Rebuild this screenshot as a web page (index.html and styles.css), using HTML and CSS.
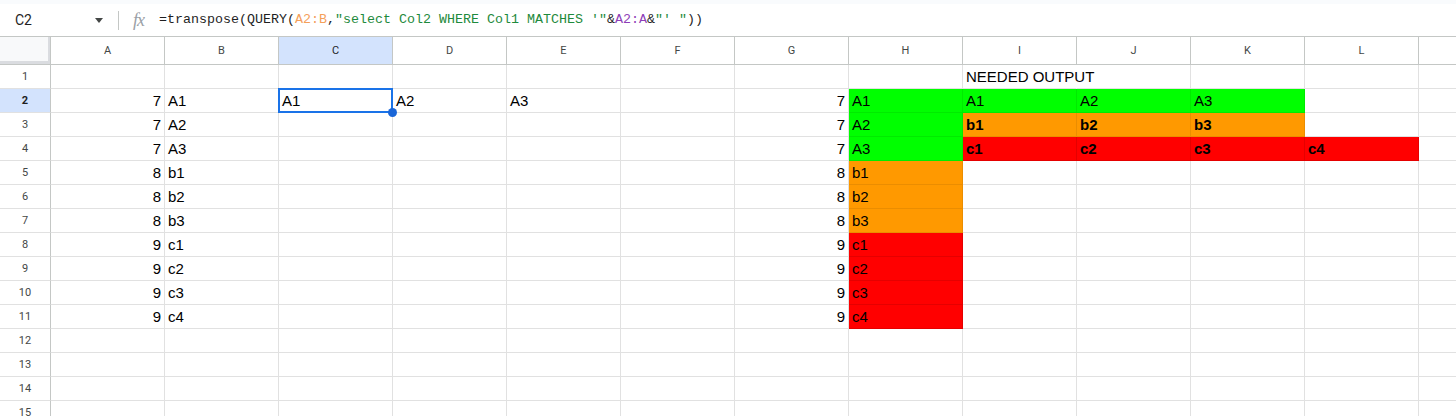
FILE: index.html
```html
<!DOCTYPE html>
<html>
<head>
<meta charset="utf-8">
<link rel="stylesheet" href="styles.css">
</head>
<body>
<div class="topstrip"></div>
<div class="fbar">
  <div class="namebox"><span class="nb-text">C2</span><span class="nb-arrow"></span></div>
  <div class="sep"></div>
  <div class="fx">fx</div>
  <div class="formula"><span class="fd">=transpose(QUERY(</span><span class="fo">A2:B</span><span class="fd">,</span><span class="fg">"select Col2 WHERE Col1 MATCHES '"</span><span class="fd">&amp;</span><span class="fp">A2:A</span><span class="fd">&amp;</span><span class="fg">"' "</span><span class="fd">))</span></div>
</div>
<div class="sheet">
  <div class="row hdr">
    <div class="corner"></div>
    <div class="ch">A</div><div class="ch">B</div><div class="ch on">C</div><div class="ch">D</div><div class="ch">E</div><div class="ch">F</div><div class="ch">G</div><div class="ch">H</div><div class="ch">I</div><div class="ch">J</div><div class="ch">K</div><div class="ch">L</div><div class="ch">M</div>
  </div>
  <div class="row">
    <div class="rh">1</div>
    <div class="c"></div><div class="c"></div><div class="c"></div><div class="c"></div><div class="c"></div><div class="c"></div><div class="c"></div><div class="c"></div><div class="c ov">NEEDED OUTPUT</div><div class="c"></div><div class="c"></div><div class="c"></div><div class="c"></div>
  </div>
  <div class="row">
    <div class="rh on">2</div>
    <div class="c n">7</div><div class="c">A1</div><div class="c cur">A1<div class="selbox"><div class="handle"></div></div></div><div class="c">A2</div><div class="c">A3</div><div class="c"></div><div class="c n">7</div><div class="c g">A1</div><div class="c g">A1</div><div class="c g">A2</div><div class="c g">A3</div><div class="c"></div><div class="c"></div>
  </div>
  <div class="row">
    <div class="rh">3</div>
    <div class="c n">7</div><div class="c">A2</div><div class="c"></div><div class="c"></div><div class="c"></div><div class="c"></div><div class="c n">7</div><div class="c g">A2</div><div class="c o b">b1</div><div class="c o b">b2</div><div class="c o b">b3</div><div class="c"></div><div class="c"></div>
  </div>
  <div class="row">
    <div class="rh">4</div>
    <div class="c n">7</div><div class="c">A3</div><div class="c"></div><div class="c"></div><div class="c"></div><div class="c"></div><div class="c n">7</div><div class="c g">A3</div><div class="c r b">c1</div><div class="c r b">c2</div><div class="c r b">c3</div><div class="c r b">c4</div><div class="c"></div>
  </div>
  <div class="row">
    <div class="rh">5</div>
    <div class="c n">8</div><div class="c">b1</div><div class="c"></div><div class="c"></div><div class="c"></div><div class="c"></div><div class="c n">8</div><div class="c o">b1</div><div class="c"></div><div class="c"></div><div class="c"></div><div class="c"></div><div class="c"></div>
  </div>
  <div class="row">
    <div class="rh">6</div>
    <div class="c n">8</div><div class="c">b2</div><div class="c"></div><div class="c"></div><div class="c"></div><div class="c"></div><div class="c n">8</div><div class="c o">b2</div><div class="c"></div><div class="c"></div><div class="c"></div><div class="c"></div><div class="c"></div>
  </div>
  <div class="row">
    <div class="rh">7</div>
    <div class="c n">8</div><div class="c">b3</div><div class="c"></div><div class="c"></div><div class="c"></div><div class="c"></div><div class="c n">8</div><div class="c o">b3</div><div class="c"></div><div class="c"></div><div class="c"></div><div class="c"></div><div class="c"></div>
  </div>
  <div class="row">
    <div class="rh">8</div>
    <div class="c n">9</div><div class="c">c1</div><div class="c"></div><div class="c"></div><div class="c"></div><div class="c"></div><div class="c n">9</div><div class="c r">c1</div><div class="c"></div><div class="c"></div><div class="c"></div><div class="c"></div><div class="c"></div>
  </div>
  <div class="row">
    <div class="rh">9</div>
    <div class="c n">9</div><div class="c">c2</div><div class="c"></div><div class="c"></div><div class="c"></div><div class="c"></div><div class="c n">9</div><div class="c r">c2</div><div class="c"></div><div class="c"></div><div class="c"></div><div class="c"></div><div class="c"></div>
  </div>
  <div class="row">
    <div class="rh">10</div>
    <div class="c n">9</div><div class="c">c3</div><div class="c"></div><div class="c"></div><div class="c"></div><div class="c"></div><div class="c n">9</div><div class="c r">c3</div><div class="c"></div><div class="c"></div><div class="c"></div><div class="c"></div><div class="c"></div>
  </div>
  <div class="row">
    <div class="rh">11</div>
    <div class="c n">9</div><div class="c">c4</div><div class="c"></div><div class="c"></div><div class="c"></div><div class="c"></div><div class="c n">9</div><div class="c r">c4</div><div class="c"></div><div class="c"></div><div class="c"></div><div class="c"></div><div class="c"></div>
  </div>
  <div class="row">
    <div class="rh">12</div>
    <div class="c"></div><div class="c"></div><div class="c"></div><div class="c"></div><div class="c"></div><div class="c"></div><div class="c"></div><div class="c"></div><div class="c"></div><div class="c"></div><div class="c"></div><div class="c"></div><div class="c"></div>
  </div>
  <div class="row">
    <div class="rh">13</div>
    <div class="c"></div><div class="c"></div><div class="c"></div><div class="c"></div><div class="c"></div><div class="c"></div><div class="c"></div><div class="c"></div><div class="c"></div><div class="c"></div><div class="c"></div><div class="c"></div><div class="c"></div>
  </div>
  <div class="row">
    <div class="rh">14</div>
    <div class="c"></div><div class="c"></div><div class="c"></div><div class="c"></div><div class="c"></div><div class="c"></div><div class="c"></div><div class="c"></div><div class="c"></div><div class="c"></div><div class="c"></div><div class="c"></div><div class="c"></div>
  </div>
  <div class="row">
    <div class="rh">15</div>
    <div class="c"></div><div class="c"></div><div class="c"></div><div class="c"></div><div class="c"></div><div class="c"></div><div class="c"></div><div class="c"></div><div class="c"></div><div class="c"></div><div class="c"></div><div class="c"></div><div class="c"></div>
  </div>
</div>
</body>
</html>
```
FILE: styles.css
```css
html, body {
  margin: 0;
  padding: 0;
}
body {
  width: 1456px;
  height: 416px;
  overflow: hidden;
  background: #ffffff;
  font-family: "Liberation Sans", Arial, sans-serif;
}
.topstrip {
  height: 4px;
  background: #f9fbfd;
}
.fbar {
  height: 32px;
  border-bottom: 1px solid #c4c7c5;
  display: flex;
  align-items: center;
}
.namebox {
  width: 118px;
  box-sizing: border-box;
  padding: 0 15px 0 15px;
  display: flex;
  align-items: center;
  justify-content: space-between;
}
.nb-text {
  font-family: Roboto, "Liberation Sans", sans-serif;
  font-size: 14px;
  color: #1f1f1f;
}
.nb-arrow {
  width: 0;
  height: 0;
  border-left: 4px solid transparent;
  border-right: 4px solid transparent;
  border-top: 5px solid #444746;
  margin-top: 1px;
}
.sep {
  width: 1px;
  height: 19px;
  background: #c4c7c5;
}
.fx {
  margin-left: 14px;
  width: 18px;
  font-family: "Liberation Serif", serif;
  font-style: italic;
  font-size: 18px;
  color: #9aa0a6;
  line-height: 20px;
  letter-spacing: -1px;
}
.formula {
  margin-left: 8px;
  font-family: "Liberation Mono", monospace;
  font-size: 13.33px;
  white-space: pre;
  line-height: 20px;
}
.fd { color: #1f1f1f; }
.fo { color: #f5a05a; }
.fg { color: #1e8a3c; }
.fp { color: #8e3fb8; }

.sheet {
  width: 1533px;
}
.row {
  display: flex;
  height: 24px;
}
.row.hdr {
  height: 28px;
}
.corner {
  flex: none;
  width: 51px;
  box-sizing: border-box;
  background: #f8f9fa;
  border-right: 1px solid #c4c7c5;
  border-bottom: 1px solid #c4c7c5;
  box-shadow: inset -2px -3px 0 #dadce0;
}
.ch {
  flex: none;
  width: 114px;
  box-sizing: border-box;
  border-right: 1px solid #c4c7c5;
  border-bottom: 1px solid #c4c7c5;
  text-align: center;
  font-family: Roboto, "Liberation Sans", sans-serif;
  font-size: 11px;
  line-height: 27px;
  color: #444746;
}
.ch.on {
  background: #d3e3fd;
  color: #1f1f1f;
}
.rh {
  flex: none;
  width: 51px;
  box-sizing: border-box;
  border-right: 1px solid #c4c7c5;
  border-bottom: 1px solid #e1e1e1;
  text-align: center;
  font-family: Roboto, "Liberation Sans", sans-serif;
  font-size: 11px;
  line-height: 23px;
  color: #444746;
}
.rh.on {
  background: #d3e3fd;
  color: #1f1f1f;
  font-weight: 700;
}
.c {
  flex: none;
  width: 114px;
  height: 24px;
  box-sizing: border-box;
  border-right: 1px solid #e1e1e1;
  border-bottom: 1px solid #e1e1e1;
  padding: 0 3px;
  font-size: 15px;
  line-height: 24px;
  white-space: nowrap;
  color: #000000;
}
.c.n {
  text-align: right;
}
.c.b {
  font-weight: 700;
}
.c.ov {
  border-right-color: transparent;
}
.c.g {
  background: #00ff00;
  border-color: rgba(0, 0, 0, 0.08);
}
.c.o {
  background: #ff9900;
  border-color: rgba(0, 0, 0, 0.08);
}
.c.r {
  background: #ff0000;
  border-color: rgba(0, 0, 0, 0.1);
}
.c.cur {
  position: relative;
}
.selbox {
  position: absolute;
  left: -1px;
  top: -1px;
  width: 115px;
  height: 25px;
  box-sizing: border-box;
  border: 2px solid #1a73e8;
}
.handle {
  position: absolute;
  right: -6px;
  bottom: -6px;
  width: 9px;
  height: 9px;
  border-radius: 50%;
  background: #1a66d8;
}
```
